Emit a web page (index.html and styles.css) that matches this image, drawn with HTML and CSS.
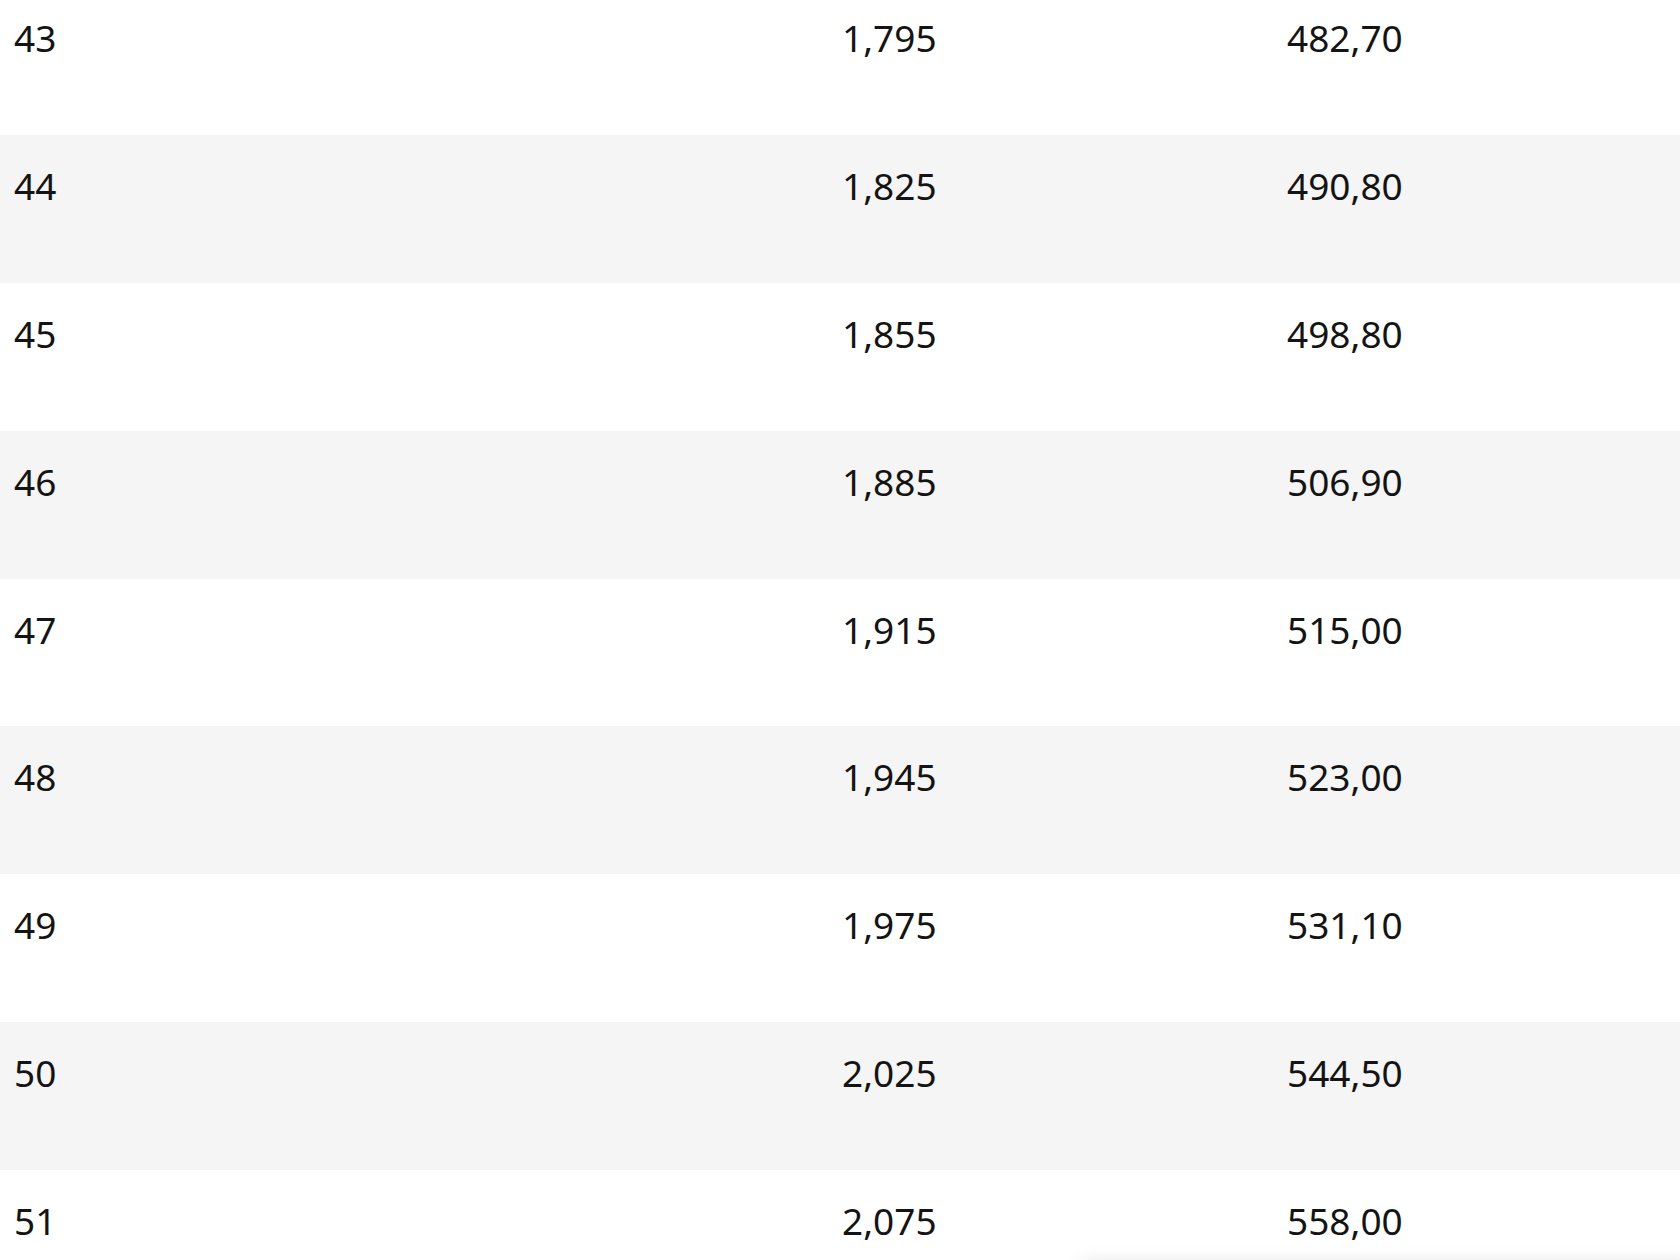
FILE: index.html
```html
<!DOCTYPE html>
<html lang="en">
<head>
<meta charset="utf-8">
<title>Table</title>
<link rel="stylesheet" href="styles.css">
</head>
<body>
<div class="table">
  <div class="row"><span class="c1">43</span><span class="c2">1,795</span><span class="c3">482,70</span></div>
  <div class="row alt"><span class="c1">44</span><span class="c2">1,825</span><span class="c3">490,80</span></div>
  <div class="row"><span class="c1">45</span><span class="c2">1,855</span><span class="c3">498,80</span></div>
  <div class="row alt"><span class="c1">46</span><span class="c2">1,885</span><span class="c3">506,90</span></div>
  <div class="row"><span class="c1">47</span><span class="c2">1,915</span><span class="c3">515,00</span></div>
  <div class="row alt"><span class="c1">48</span><span class="c2">1,945</span><span class="c3">523,00</span></div>
  <div class="row"><span class="c1">49</span><span class="c2">1,975</span><span class="c3">531,10</span></div>
  <div class="row alt"><span class="c1">50</span><span class="c2">2,025</span><span class="c3">544,50</span></div>
  <div class="row"><span class="c1">51</span><span class="c2">2,075</span><span class="c3">558,00</span></div>
</div>
<div class="floating-bar"></div>
</body>
</html>
```
FILE: styles.css
```css
html, body {
  margin: 0;
  padding: 0;
  background: #ffffff;
  overflow: hidden;
}
body {
  font-family: "Noto Sans", "Open Sans", sans-serif;
  font-size: 37px;
  color: #141414;
}
.table {
  margin-top: -12.86px;
}
.row {
  display: grid;
  grid-template-columns: 828px 445px 1fr;
  height: 147.86px;
  box-sizing: border-box;
  padding-top: 25px;
  line-height: normal;
}
.row.alt {
  background: #f5f5f5;
}
.row span {
  padding-left: 14px;
}
.floating-bar {
  position: fixed;
  left: 1080px;
  right: -20px;
  bottom: -40px;
  height: 40px;
  background: #fff;
  box-shadow: 0 0 18px rgba(0, 0, 0, 0.09);
  border-radius: 8px;
}
```
